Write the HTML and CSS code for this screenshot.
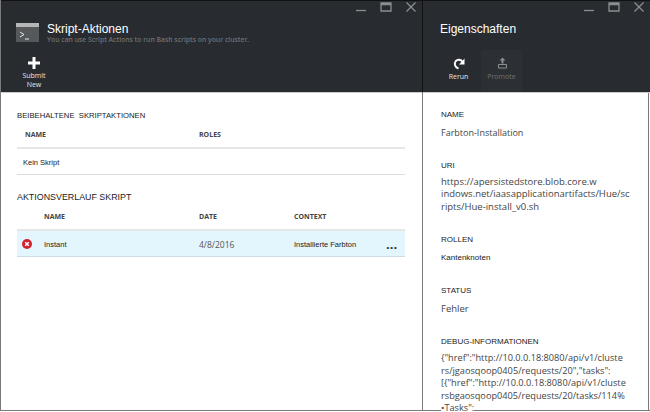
FILE: index.html
```html
<!DOCTYPE html>
<html lang="de">
<head>
    <meta charset="UTF-8">
    <title>Skript-Aktionen</title>
    <link rel="stylesheet" href="styles.css">
</head>
<body>
    <div class="portal">
        <section class="blade blade-main">
            <header class="blade-head">
                <div class="win-btns">
                    <svg class="win-icon" viewBox="0 0 12 12"><path d="M1 9.5h10" /></svg>
                    <svg class="win-icon" viewBox="0 0 12 12"><path d="M1 2h10v8H1z M1 3.5h10" /></svg>
                    <svg class="win-icon" viewBox="0 0 12 12"><path d="M1.5 1.5l9 9M10.5 1.5l-9 9" /></svg>
                </div>
                <div class="title-row">
                    <svg class="script-icon" width="23" height="19" viewBox="0 0 23 19">
                        <rect width="23" height="19" fill="#55595c" />
                        <rect width="23" height="4" fill="#b4b6b8" />
                        <path d="M4 9l4 2.5L4 14" fill="none" stroke="#e8e8e8" stroke-width="1" />
                        <path d="M9 16h4" stroke="#e8e8e8" stroke-width="1" />
                    </svg>
                    <div>
                        <h1 class="title">Skript-Aktionen</h1>
                        <p class="subtitle">You can use Script Actions to run Bash scripts on your cluster.</p>
                    </div>
                </div>
                <div class="toolbar">
                    <div class="tool tool-submit">
                        <svg width="12" height="12" viewBox="0 0 12 12"><path d="M6 0v12M0 6h12" stroke="#fff" stroke-width="3" /></svg>
                        <span>Submit<br>New</span>
                    </div>
                </div>
            </header>
            <div class="blade-body">
                <h2 class="section-label">BEIBEHALTENE&nbsp; SKRIPTAKTIONEN</h2>
                <div class="table-head head-kept">
                    <span>NAME</span>
                    <span>ROLES</span>
                </div>
                <div class="row-empty">Kein Skript</div>
                <h2 class="section-label section-history">AKTIONSVERLAUF SKRIPT</h2>
                <div class="table-head head-history">
                    <span>NAME</span>
                    <span>DATE</span>
                    <span>CONTEXT</span>
                </div>
                <div class="row-history">
                    <svg width="10" height="10" viewBox="0 0 10 10">
                        <circle cx="5" cy="5" r="5" fill="#d2232f" />
                        <path d="M3.2 3.2l3.6 3.6M6.8 3.2l-3.6 3.6" stroke="#fff" stroke-width="1.5" />
                    </svg>
                    <span class="cell-small">Instant</span>
                    <span class="cell-date">4/8/2016</span>
                    <span class="cell-small">Installierte Farbton</span>
                    <span class="more">...</span>
                </div>
            </div>
        </section>
        <section class="blade blade-props">
            <header class="blade-head">
                <div class="win-btns">
                    <svg class="win-icon" viewBox="0 0 12 12"><path d="M1 9.5h10" /></svg>
                    <svg class="win-icon" viewBox="0 0 12 12"><path d="M1 2h10v8H1z M1 3.5h10" /></svg>
                    <svg class="win-icon" viewBox="0 0 12 12"><path d="M1.5 1.5l9 9M10.5 1.5l-9 9" /></svg>
                </div>
                <h1 class="title props-title">Eigenschaften</h1>
                <div class="toolbar">
                    <div class="tool">
                        <svg width="14" height="14" viewBox="0 0 14 14"><path d="M6.5 12.5C2.8 11.5 1.8 7.5 3.8 5 5.8 3 9 3.3 10.5 5.8" fill="none" stroke="#fff" stroke-width="2" /><path d="M12.5 2.5v6H7z" fill="#fff" /></svg>
                        <span>Rerun</span>
                    </div>
                    <div class="tool tool-off">
                        <svg width="14" height="14" viewBox="0 0 14 14"><path d="M3.5 8.5h8V12h-8z" fill="none" stroke="#8b8e90" /><path d="M7.5 1.500L4.500 4.500h2V7.500h2V4.500h2z" fill="#8b8e90" /></svg>
                        <span>Promote</span>
                    </div>
                </div>
            </header>
            <div class="blade-body props-body">
                <h3 class="prop-label">NAME</h3>
                <p class="prop-value prop-name">Farbton-Installation</p>
                <h3 class="prop-label">URI</h3>
                <p class="prop-value prop-uri">https://apersistedstore.blob.core.w<br>indows.net/iaasapplicationartifacts/Hue/sc<br>ripts/Hue-install_v0.sh</p>
                <h3 class="prop-label">ROLLEN</h3>
                <p class="prop-value prop-small">Kantenknoten</p>
                <h3 class="prop-label">STATUS</h3>
                <p class="prop-value prop-status">Fehler</p>
                <h3 class="prop-label">DEBUG-INFORMATIONEN</h3>
                <p class="prop-value prop-debug">{"href":"http://10.0.0.18:8080/api/v1/cluste<br>rs/jgaosqoop0405/requests/20","tasks":<br>[{"href":"http://10.0.0.18:8080/api/v1/cluste<br>rsbgaosqoop0405/requests/20/tasks/114%<br><span class="debug-tail">•Tasks":</span></p>
            </div>
        </section>
    </div>
</body>
</html>
```

FILE: styles.css
```css
html, body {
    margin: 0;
    height: 100%;
    overflow: hidden;
}
body {
    font-family: "Open Sans", "Liberation Sans", sans-serif;
    color: #333;
    background-color: #fff;
}
h1, h2, h3, p {
    margin: 0;
    font-weight: normal;
}
.portal {
    display: flex;
    height: 411px;
    border-left: 1px solid #7a7a7a;
    border-bottom: 1px solid #7a7a7a;
    box-sizing: border-box;
}
.blade {
    display: flex;
    flex-direction: column;
    box-sizing: border-box;
}
.blade-main {
    width: 422px;
    border-right: 1px solid #7a7a7a;
}
.blade-props {
    width: 227px;
}
.blade-head {
    display: flex;
    flex-direction: column;
    height: 93px;
    flex-shrink: 0;
    background-color: #282c30;
    border-top: 1px solid #111;
    border-bottom: 1px solid #ccc;
    box-sizing: border-box;
    color: #fff;
}
.blade-main .blade-head {
    margin-right: -1px;
    border-right: 1px solid #111;
}
.win-btns {
    display: flex;
    justify-content: flex-end;
    gap: 13px;
    padding: 0 5px 3px 0;
}
.win-icon {
    width: 12px;
    height: 12px;
    fill: none;
    stroke: #8b8e90;
    stroke-width: 1.3;
}
.title-row {
    display: flex;
    gap: 8px;
    padding: 6px 0 0 15px;
}
.script-icon {
    margin-top: 1px;
}
.title {
    font-family: "Liberation Sans", sans-serif;
    font-size: 12px;
    line-height: 14px;
}
.subtitle {
    font-size: 6.8px;
    font-weight: 600;
    line-height: 8px;
    color: #6d7073;
}
.toolbar {
    display: flex;
    flex: 1;
}
.tool {
    width: 41px;
    display: flex;
    flex-direction: column;
    align-items: center;
    gap: 2px;
    padding-top: 6px;
    box-sizing: border-box;
    font-size: 7px;
    line-height: 9px;
    text-align: center;
    color: #e4e4e4;
}
.tool-submit {
    width: 36px;
    margin: 13px 0 0 15px;
    padding-top: 0;
}
.tool-off {
    color: #6d7073;
    background-color: #2c3035;
}
.blade-body {
    flex: 1;
    min-height: 0;
    padding: 11px 17px 0 16px;
    overflow: hidden;
}
.section-label {
    font-family: "Liberation Sans", sans-serif;
    font-size: 7.7px;
    line-height: 12px;
    color: #222;
    padding-top: 6px;
}
.section-history {
    font-size: 8.9px;
    margin-top: 11px;
    padding-top: 5px;
}
.table-head {
    display: grid;
    height: 27px;
    align-items: center;
    font-size: 7px;
    font-weight: 700;
    color: #444;
    border-bottom: 2px solid #e6e6e6;
    box-sizing: border-box;
}
.head-kept {
    grid-template-columns: 174px 1fr;
    padding-left: 8px;
}
.head-history {
    grid-template-columns: 155px 95px 1fr;
    padding-left: 27px;
    margin-top: 1px;
}
.row-empty {
    height: 26px;
    line-height: 26px;
    padding: 1px 0 0 6px;
    font-family: "Liberation Sans", sans-serif;
    font-size: 7.5px;
    color: #222;
    border-bottom: 1px solid #dcdcdc;
    box-sizing: border-box;
}
.row-history {
    display: grid;
    grid-template-columns: 22px 155px 95px 1fr 19px;
    align-items: center;
    height: 26px;
    padding: 1px 0 0 5px;
    background-color: #e3f5fd;
    border-bottom: 1px solid #ccdde4;
    box-sizing: border-box;
}
.cell-small {
    font-family: "Liberation Sans", sans-serif;
    font-size: 7.5px;
    color: #222;
}
.cell-date {
    font-size: 8.5px;
    color: #555;
}
.more {
    font-size: 13px;
    font-weight: 700;
    line-height: 12px;
}
.props-title {
    padding: 6px 0 0 17px;
    margin-bottom: 14px;
}
.blade-props .toolbar {
    gap: 2px;
    padding-left: 15px;
}
.props-body {
    margin-right: 1px;
    padding: 16px 0 0 18px;
    border-right: 1px solid #7a7a7a;
    overflow: visible;
}
.prop-label {
    font-family: "Liberation Sans", sans-serif;
    font-size: 8px;
    line-height: 11px;
    color: #222;
}
.prop-value {
    font-size: 9.5px;
    line-height: 12.5px;
    color: #444;
    margin: 7px 0 20px;
    white-space: nowrap;
}
.prop-name {
    font-size: 9px;
}
.prop-uri {
    margin: 5px 0 21px;
}
.prop-small {
    font-family: "Liberation Sans", sans-serif;
    font-size: 8px;
    color: #222;
}
.prop-status {
    margin-bottom: 21px;
}
.prop-debug {
    margin: 5px 0 0;
    font-size: 9.2px;
    line-height: 12.6px;
}
.debug-tail {
    background-color: #fff;
}
```
